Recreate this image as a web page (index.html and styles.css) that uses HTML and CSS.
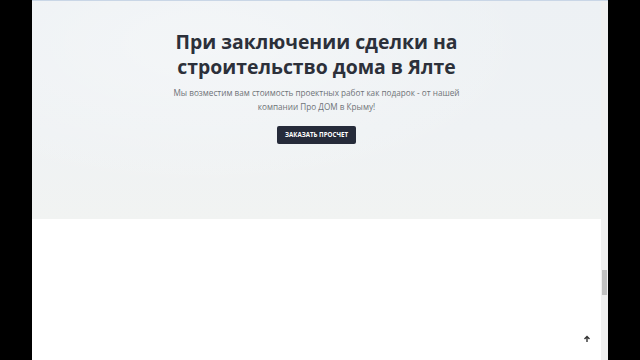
FILE: index.html
```html
<!DOCTYPE html>
<html lang="ru">
<head>
<meta charset="utf-8">
<link rel="stylesheet" href="styles.css">
</head>
<body>
<div class="screen">
  <div class="side"></div>
  <div class="window">
    <div class="page">
      <section class="hero">
        <h1 class="title">При заключении сделки на<br>строительство дома в Ялте</h1>
        <p class="lead">Мы возместим вам стоимость проектных работ как подарок - от нашей<br>компании Про ДОМ в Крыму!</p>
        <a class="btn">ЗАКАЗАТЬ ПРОСЧЕТ</a>
      </section>
      <section class="blank"></section>
      <div class="totop">
        <svg width="8" height="8" viewBox="0 0 8 8"><path d="M4 7V1.5M1.5 4L4 1.5L6.5 4" stroke="#333" stroke-width="1.4" fill="none"/></svg>
      </div>
    </div>
    <div class="scrollbar">
      <div class="arrow up"></div>
      <div class="track"><div class="thumb"></div></div>
      <div class="arrow down"></div>
    </div>
  </div>
  <div class="side right"></div>
</div>
</body>
</html>
```
FILE: styles.css
```css
html, body { margin: 0; padding: 0; }
body { background: #000; width: 640px; height: 360px; overflow: hidden; font-family: "Open Sans", "Liberation Sans", sans-serif; }
.screen { display: flex; height: 360px; }
.side { width: 32px; background: #000; }
.side.right { width: 32px; }
.window { width: 576px; display: flex; background: #fff; border-top: 1px solid #c9d6e6; box-sizing: border-box; }
.page { flex: 1; position: relative; display: flex; flex-direction: column; }
.hero {
  height: 218px;
  background:
    radial-gradient(ellipse at 30% 20%, rgba(255,255,255,0.35), rgba(255,255,255,0) 60%),
    linear-gradient(180deg, #edf1f4 0%, #eff2f4 60%, #f1f3f2 100%);
  display: flex; flex-direction: column; align-items: center;
  padding-top: 28px; box-sizing: border-box;
}
.title { margin: 0; font-size: 19.4px; line-height: 25px; font-weight: 700; color: #2c303a; text-align: center; }
.lead { margin: 7px 0 0; font-size: 8.2px; line-height: 14px; color: #6f7378; text-align: center; font-weight: 400; }
.btn { margin-top: 12px; background: #262b3a; color: #fff; font-size: 6.2px; font-weight: 700; padding: 5px 8px 6px; line-height: 7px; border-radius: 2px; }
.blank { flex: 1; background: #fff; }
.totop { position: absolute; left: 551px; top: 334px; width: 8px; height: 8px; }
.totop svg { display: block; }
.scrollbar { width: 7px; background: #f0f0f0; display: flex; flex-direction: column; }
.arrow { height: 8px; }
.track { flex: 1; position: relative; }
.thumb { position: absolute; left: 1px; right: 1px; top: 261px; height: 25px; background: #c1c1c1; }
```
